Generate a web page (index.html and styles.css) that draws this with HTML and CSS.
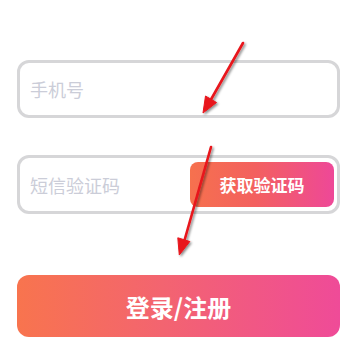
FILE: index.html
```html
<!DOCTYPE html>
<html lang="zh">
<head>
<meta charset="utf-8">
<link rel="stylesheet" href="styles.css">
</head>
<body>
<div class="page">
  <div class="field">
    <span class="placeholder">手机号</span>
  </div>
  <div class="field field-code">
    <span class="placeholder">短信验证码</span>
    <div class="code-btn">获取验证码</div>
  </div>
  <div class="login-btn">登录/注册</div>
  <svg class="arrows" width="358" height="362" viewBox="0 0 358 362">
    <defs>
      <filter id="sh" x="-50%" y="-50%" width="200%" height="200%">
        <feDropShadow dx="1.5" dy="1.5" stdDeviation="1.2" flood-color="#000" flood-opacity="0.45"/>
      </filter>
    </defs>
    <g filter="url(#sh)" fill="#e8141b" stroke="#e8141b">
      <line x1="243" y1="43" x2="209" y2="103" stroke-width="2.6" stroke-linecap="round"/>
      <polygon points="203,113 216.5,102.5 205.5,96" stroke-width="1" stroke-linejoin="round"/>
      <line x1="211" y1="147" x2="184" y2="242" stroke-width="2.6" stroke-linecap="round"/>
      <polygon points="179.3,255 189.8,241.5 177.8,237.8" stroke-width="1" stroke-linejoin="round"/>
    </g>
  </svg>
</div>
</body>
</html>
```
FILE: styles.css
```css
html, body {
  margin: 0;
  padding: 0;
  background: #ffffff;
}
.page {
  position: relative;
  width: 358px;
  height: 362px;
  padding: 60px 18px 0 17px;
  box-sizing: border-box;
  font-family: "Noto Sans CJK SC", "Noto Sans", sans-serif;
}
.field {
  box-sizing: border-box;
  height: 58px;
  border: 3px solid #d6d6d8;
  border-radius: 12px;
  display: flex;
  align-items: center;
  padding: 0 3px 0 10px;
}
.field-code {
  margin-top: 37px;
  height: 59px;
  justify-content: space-between;
}
.placeholder {
  font-size: 18px;
  color: #cbcdd8;
  line-height: 1;
}
.code-btn {
  width: 144px;
  height: 45px;
  border-radius: 8px;
  background: linear-gradient(90deg, #f6714e 0%, #f3605f 45%, #ee4898 100%);
  color: #ffffff;
  font-size: 17px;
  font-weight: 700;
  display: flex;
  align-items: center;
  justify-content: center;
}
.login-btn {
  margin-top: 61px;
  height: 62px;
  border-radius: 12px;
  background: linear-gradient(90deg, #f8744e 0%, #f36470 45%, #ef4b98 100%);
  color: #ffffff;
  font-size: 24px;
  font-weight: 700;
  display: flex;
  align-items: center;
  justify-content: center;
}
.arrows {
  position: absolute;
  left: 0;
  top: 0;
  pointer-events: none;
}
```
